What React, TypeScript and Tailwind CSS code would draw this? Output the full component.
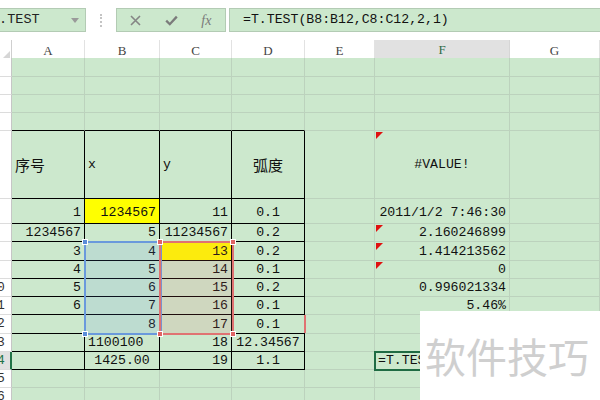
import React from 'react';

type Align = 'l' | 'r' | 'c';
interface Cell {
    t?: string;
    a?: Align;
    yellow?: boolean;
}
interface Row {
    n: number;
    h: string;
    tall?: boolean;
    cells: Record<number, Cell>;
}

const COLS = 'grid grid-cols-[12px_73px_75px_72px_73px_70px_135px_90px]';
const LETTERS = ['A', 'B', 'C', 'D', 'E', 'F', 'G'];

const ROWS: Row[] = [
    { n: 1, h: 'h-[19px]', cells: {} },
    { n: 2, h: 'h-[18px]', cells: {} },
    { n: 3, h: 'h-[18px]', cells: {} },
    { n: 4, h: 'h-[18px]', cells: {} },
    {
        n: 5, h: 'h-[68px]', tall: true, cells: {
            1: { t: '序号', a: 'l' }, 2: { t: 'x', a: 'l' }, 3: { t: 'y', a: 'l' }, 4: { t: '弧度', a: 'c' }, 6: { t: '#VALUE!', a: 'c' },
        },
    },
    {
        n: 6, h: 'h-[25px]', cells: {
            1: { t: '1', a: 'r' }, 2: { t: '1234567', a: 'r', yellow: true }, 3: { t: '11', a: 'r' }, 4: { t: '0.1', a: 'c' }, 6: { t: '2011/1/2 7:46:30', a: 'r' },
        },
    },
    {
        n: 7, h: 'h-[18px]', cells: {
            1: { t: '1234567', a: 'r' }, 2: { t: '5', a: 'r' }, 3: { t: '11234567', a: 'r' }, 4: { t: '0.2', a: 'c' }, 6: { t: '2.160246899', a: 'r' },
        },
    },
    {
        n: 8, h: 'h-[19px]', cells: {
            1: { t: '3', a: 'r' }, 2: { t: '4', a: 'r' }, 3: { t: '13', a: 'r', yellow: true }, 4: { t: '0.2', a: 'c' }, 6: { t: '1.414213562', a: 'r' },
        },
    },
    {
        n: 9, h: 'h-[18px]', cells: {
            1: { t: '4', a: 'r' }, 2: { t: '5', a: 'r' }, 3: { t: '14', a: 'r' }, 4: { t: '0.1', a: 'c' }, 6: { t: '0', a: 'r' },
        },
    },
    {
        n: 10, h: 'h-[18px]', cells: {
            1: { t: '5', a: 'r' }, 2: { t: '6', a: 'r' }, 3: { t: '15', a: 'r' }, 4: { t: '0.2', a: 'c' }, 6: { t: '0.996021334', a: 'r' },
        },
    },
    {
        n: 11, h: 'h-[18px]', cells: {
            1: { t: '6', a: 'r' }, 2: { t: '7', a: 'r' }, 3: { t: '16', a: 'r' }, 4: { t: '0.1', a: 'c' }, 6: { t: '5.46%', a: 'r' },
        },
    },
    {
        n: 12, h: 'h-[19px]', cells: {
            2: { t: '8', a: 'r' }, 3: { t: '17', a: 'r' }, 4: { t: '0.1', a: 'c' },
        },
    },
    {
        n: 13, h: 'h-[18px]', cells: {
            2: { t: '1100100', a: 'l' }, 3: { t: '18', a: 'r' }, 4: { t: '12.34567', a: 'c' },
        },
    },
    {
        n: 14, h: 'h-[18px]', cells: {
            2: { t: '1425.00', a: 'c' }, 3: { t: '19', a: 'r' }, 4: { t: '1.1', a: 'c' }, 6: { t: '=T.TEST', a: 'l' },
        },
    },
    { n: 15, h: 'h-[18px]', cells: {} },
    { n: 16, h: 'h-[18px]', cells: {} },
];

// petit triangle rouge (commentaire) en haut à gauche d'une cellule
const Flag = ({ x, y }: { x: number; y: number }) => (
    <svg className="absolute" style={{ left: x, top: y }} width="7" height="7" viewBox="0 0 7 7">
        <polygon points="0,0 7,0 0,7" fill="#e01010" />
    </svg>
);

const Handle = ({ x, y, color }: { x: number; y: number; color: string }) => (
    <div className={`absolute w-[6px] h-[6px] border border-white ${color}`} style={{ left: x - 3, top: y - 3 }} />
);

const SheetRow: React.FC<{ row: Row }> = ({ row }) => {
    const active = row.n === 14;
    return (
        <div className={`${COLS} ${row.h}`}>
            {/* en-tête de ligne : la colonne est défilée, seul le dernier chiffre dépasse */}
            <div className={`relative overflow-hidden border-b border-[#dcdcdc] ${active ? 'bg-[#e1e1e1] border-r-2 border-r-[#217346] text-[#217346]' : 'bg-white border-r border-r-[#c6c6c6] text-[#333]'}`}>
                {row.n >= 10 && (
                    <div className="absolute inset-y-0 -left-[17px] w-[28px] flex items-center justify-center text-[13px]">
                        {row.n}
                    </div>
                )}
            </div>
            {LETTERS.map((_, i) => {
                const c = i + 1;
                const cell = row.cells[c];
                const inTable = c <= 4 && row.n >= 5 && row.n <= 14;
                const blackBottom = c <= 4 && row.n >= 4 && row.n <= 14;
                const align = cell?.a === 'l' ? 'justify-start pl-[3px]' : cell?.a === 'c' ? 'justify-center' : 'justify-end pr-[3px]';
                const vert = row.tall ? 'items-center' : row.n === 6 ? 'items-end pb-[3px]' : 'items-end pb-[1px]';
                const cjk = cell?.t && /[\u4e00-\u9fff]/.test(cell.t);
                return (
                    <div
                        key={c}
                        className={`flex overflow-hidden whitespace-nowrap border-r border-b ${inTable ? 'border-r-black' : 'border-r-[#bcd2bd]'} ${blackBottom ? 'border-b-black' : 'border-b-[#bcd2bd]'} ${cell?.yellow ? 'bg-[#ffff00]' : 'bg-[#cce8cd]'} ${align} ${vert}`}
                    >
                        {cell?.t && (
                            <span className={cjk ? "font-['Noto_Sans_CJK_SC',sans-serif] text-[15px] leading-[18px] text-[#111]" : 'text-[13.2px] leading-[15px] text-[#111]'}>
                                {cell.t}
                            </span>
                        )}
                    </div>
                );
            })}
        </div>
    );
};

export default function App() {
    return (
        <div className="relative w-[600px] h-[400px] overflow-hidden bg-white font-['Liberation_Mono',monospace]">
            {/* barre de formule */}
            <div className="flex h-[40px] items-start pt-[8px]">
                <div className="relative w-[86px] h-[24px] flex items-center overflow-hidden bg-[#cce8cd] border border-l-0 border-[#b3cbb4]">
                    <span className="ml-[-9px] text-[13.5px] text-[#222]">T.TEST</span>
                    <svg className="absolute left-[71px] top-[9px]" width="8" height="5" viewBox="0 0 8 5">
                        <polygon points="0,0 8,0 4,5" fill="#9a9a9a" />
                    </svg>
                </div>
                <div className="w-[30px] h-[24px] flex items-center justify-center">
                    <div className="w-0 h-[13px] border-l-2 border-dotted border-[#c4c4c4]" />
                </div>
                <div className="w-[110px] h-[24px] flex items-center bg-[#cce8cd] border border-[#b3cbb4]">
                    <div className="w-[38px] flex justify-center">
                        <svg width="11" height="11" viewBox="0 0 11 11">
                            <path d="M1 1 L10 10 M10 1 L1 10" stroke="#858585" strokeWidth="1.6" fill="none" />
                        </svg>
                    </div>
                    <div className="w-[34px] flex justify-center">
                        <svg width="13" height="11" viewBox="0 0 13 11">
                            <path d="M1.2 5.6 L4.8 9.2 L11.8 1.6" stroke="#7b7b7b" strokeWidth="2.3" fill="none" />
                        </svg>
                    </div>
                    <div className="w-[38px] flex justify-center">
                        <span className="font-['Liberation_Serif',serif] italic text-[14px] text-[#7a7a7a]">fx</span>
                    </div>
                </div>
                <div className="ml-[3px] flex-1 h-[24px] flex items-center pl-[13px] bg-[#cce8cd] border border-r-0 border-[#b3cbb4]">
                    <span className="text-[13.2px] text-[#111] whitespace-nowrap">=T.TEST(B8:B12,C8:C12,2,1)</span>
                </div>
            </div>

            {/* en-têtes de colonnes */}
            <div className={`${COLS} h-[18px] bg-white`}>
                <div className="relative border-r border-b border-[#cfcfcf]">
                    <svg className="absolute right-[1px] bottom-[1px]" width="9" height="9" viewBox="0 0 9 9">
                        <polygon points="9,0 9,9 0,9" fill="#d6d6d6" />
                    </svg>
                </div>
                {LETTERS.map(l => (
                    <div
                        key={l}
                        className={`flex items-center justify-center text-[13px] font-['Liberation_Serif',serif] ${l === 'F' ? 'bg-[#e1e1e1] border-b-2 border-[#217346] text-[#2d6a47] border-r border-r-[#d6d6d6]' : 'text-[#444] border-r border-b border-r-[#e2e2e2] border-b-[#cfcfcf]'}`}
                    >
                        {l}
                    </div>
                ))}
            </div>

            {ROWS.map(r => <SheetRow key={r.n} row={r} />)}

            {/* plages de référence de la formule */}
            <div className="absolute left-[84px] top-[241px] w-[78px] h-[94px] border-2 border-[#6a99dc] bg-[rgba(90,140,230,0.13)]" />
            <div className="absolute left-[159px] top-[241px] w-[75px] h-[94px] border-2 border-[#e07272] bg-[rgba(230,100,100,0.13)]" />
            <Handle x={85} y={242} color="bg-[#5b8ed8]" />
            <Handle x={85} y={334} color="bg-[#5b8ed8]" />
            <Handle x={160} y={242} color="bg-[#e06464]" />
            <Handle x={160} y={334} color="bg-[#e06464]" />
            <Handle x={233} y={242} color="bg-[#e06464]" />
            <Handle x={233} y={334} color="bg-[#e06464]" />
            <div className="absolute left-[304px] top-[315px] w-[2px] h-[18px] bg-[#e07272]" />

            <Flag x={376} y={132} />
            <Flag x={376} y={225} />
            <Flag x={376} y={243} />
            <Flag x={376} y={262} />

            {/* cellule active */}
            <div className="absolute left-[374px] top-[351px] w-[70px] h-[20px] border-2 border-[#1f6b43]" />

            {/* filigrane */}
            <div className="absolute left-[420px] top-[311px] w-[180px] h-[89px] bg-white flex items-center pl-[5px]">
                <span className="font-['Noto_Sans_CJK_SC',sans-serif] text-[41px] leading-none text-[#cfcfcf] whitespace-nowrap">软件技巧</span>
            </div>
        </div>
    );
}
